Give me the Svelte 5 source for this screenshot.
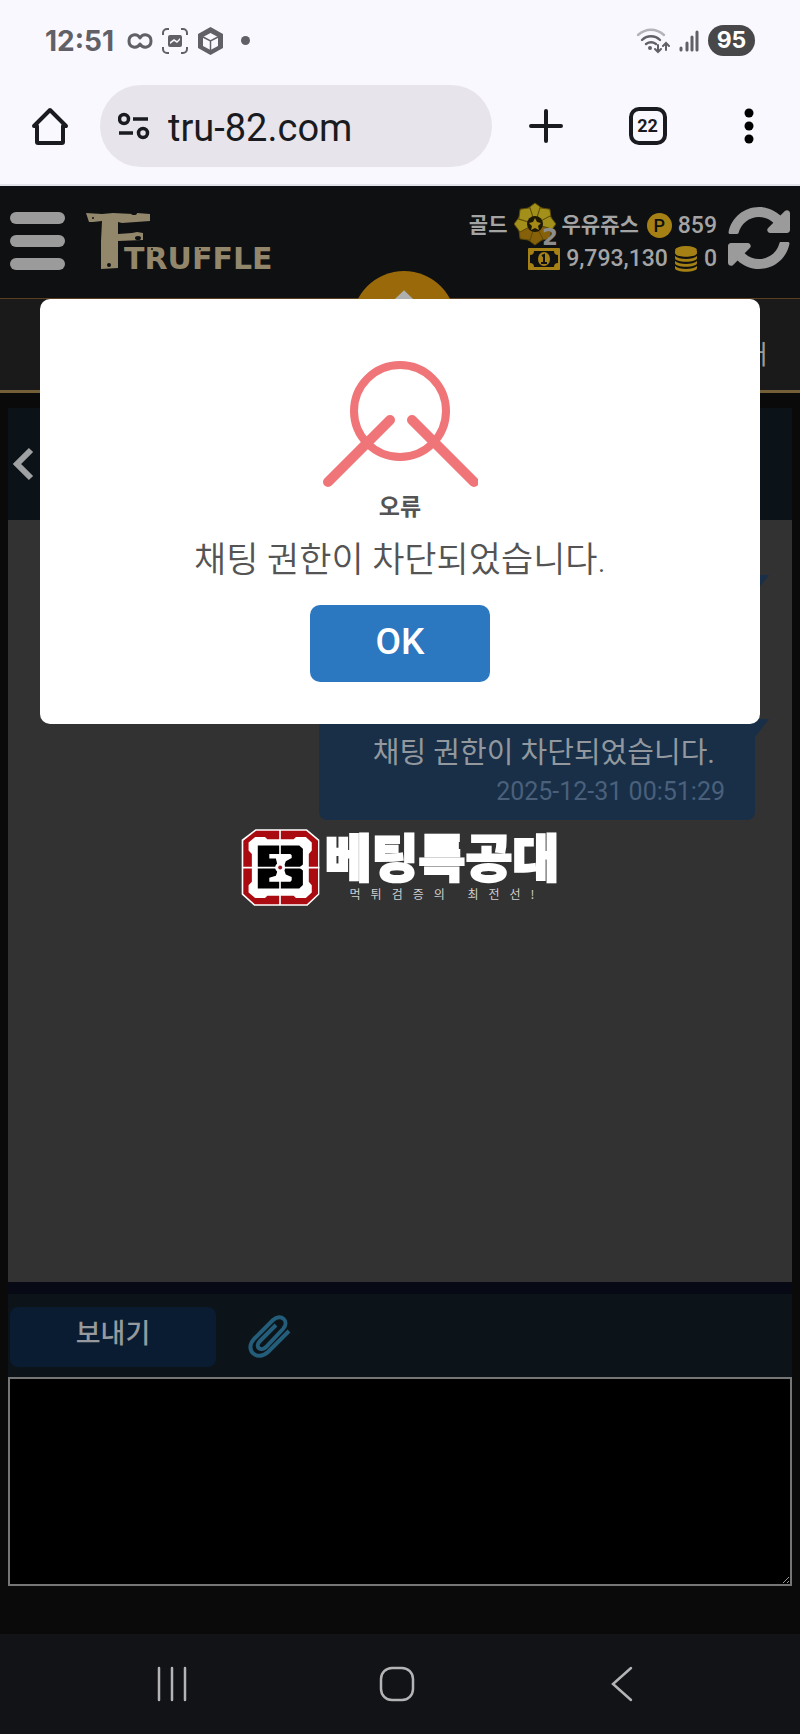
<script lang="ts">
	type Message = { text: string; time: string };

	let messages: Message[] = $state([
		{ text: '채팅 권한이 차단되었습니다.', time: '2025-12-31 00:51:29' },
		{ text: '채팅 권한이 차단되었습니다.', time: '2025-12-31 00:51:29' }
	]);
	let url = $state('tru-82.com');
	let draft = $state('');
	let alertOpen = $state(true);

	const rays = [0, 45, 90, 135, 180, 225, 270, 315];
</script>

<div class="screen">
	<header class="chrome">
		<div class="status">
			<div class="status-side">
				<span class="clock">12:51</span>
				<svg class="infinity" viewBox="0 0 26 16" aria-hidden="true">
					<path
						d="M13 5C10 0 2 1 2 8s8 8 11 3c3 5 11 4 11-3s-8-8-11-3z"
						fill="none"
						stroke="currentColor"
						stroke-width="3"
						stroke-linejoin="round"
					/>
				</svg>
				<svg class="icon26" viewBox="0 0 26 26" aria-hidden="true">
					<path
						d="M1 7V5a4 4 0 0 1 4-4h2M19 1h2a4 4 0 0 1 4 4v2M25 19v2a4 4 0 0 1-4 4h-2M7 25H5a4 4 0 0 1-4-4v-2"
						fill="none"
						stroke="currentColor"
						stroke-width="2"
					/>
					<rect x="6" y="7" width="14" height="12" rx="2" fill="currentColor" />
					<path d="M8 14l4-3 3 2 3-3v2l-3 3-3-2-4 3z" fill="#faf8ff" />
				</svg>
				<svg class="hex" viewBox="0 0 27 28" aria-hidden="true">
					<path d="M13.5 0L26 7v14l-12.500 7L1 21V7z" fill="currentColor" />
					<path d="M13.500 6L21 10v9l-7.500 4L6 19v-9z" fill="#faf8ff" />
					<path d="M6 10l7.500 4L21 10M13.500 14v9" fill="none" stroke="currentColor" stroke-width="1.500" />
				</svg>
				<span class="more-dot"></span>
			</div>
			<div class="status-side right">
				<svg class="wifi" viewBox="0 0 34 26" aria-hidden="true">
					<g fill="none" stroke-width="2.400" stroke-linecap="round">
						<path d="M2 7c8-7 18-7 26 0" stroke="#b4b3b8" />
						<path d="M6 12c5-5 13-5 18 0" stroke="currentColor" />
						<path d="M10 16c3-2 7-2 10 0" stroke="currentColor" />
						<path d="M22 17v7m-3-3l3 3 3-3M30 22v-7m-3 3l3-3 3 3" stroke="currentColor" stroke-width="2" />
					</g>
					<circle cx="14" cy="20" r="2" fill="currentColor" />
				</svg>
				<svg class="signal" viewBox="0 0 20 22" aria-hidden="true">
					<path
						d="M2 18v2M8 13v7M13 7v13M18 2v18"
						stroke="currentColor"
						stroke-width="3"
						stroke-linecap="round"
					/>
				</svg>
				<span class="battery">95</span>
			</div>
		</div>
		<div class="toolbar">
			<button class="plain" aria-label="Home">
				<svg class="icon38" viewBox="0 0 38 38" aria-hidden="true">
					<path
						d="M2 19L18 3l16 16h-3v16a1 1 0 0 1-1 1H6a1 1 0 0 1-1-1V19z"
						fill="none"
						stroke="currentColor"
						stroke-width="4"
						stroke-linejoin="round"
					/>
				</svg>
			</button>
			<label class="omnibox">
				<svg class="tune" viewBox="0 0 32 28" aria-hidden="true">
					<g fill="none" stroke="currentColor" stroke-width="3.500">
						<circle cx="6" cy="7" r="4.500" />
						<circle cx="25" cy="21" r="4.500" />
						<path d="M15 7h15M1 21h14" />
					</g>
				</svg>
				<input type="text" aria-label="Address" bind:value={url} />
			</label>
			<div class="actions">
				<button class="plain" aria-label="New tab">
					<svg class="icon34" viewBox="0 0 34 34" aria-hidden="true">
						<path d="M17 2v30M2 17h30" stroke="currentColor" stroke-width="4" stroke-linecap="round" />
					</svg>
				</button>
				<button class="plain tabs" aria-label="22 tabs">22</button>
				<button class="plain" aria-label="Menu">
					<svg class="dots" viewBox="0 0 10 36" aria-hidden="true">
						<circle cx="5" cy="5" r="4.500" />
						<circle cx="5" cy="18" r="4.500" />
						<circle cx="5" cy="31" r="4.500" />
					</svg>
				</button>
			</div>
		</div>
	</header>

	<main class="page">
		<div class="site-head">
			<button class="plain burger" aria-label="메뉴">
				<span></span>
				<span></span>
				<span></span>
			</button>
			<a class="brand" href="#home">
				<svg viewBox="0 0 200 66" role="img" aria-label="TRUFFLE">
					<g fill="#92866b">
						<path d="M1 1l16 1 11-1 20 1 4-1 13 1v7l-28 2-4-1v12l14-1 5-1 6 1v7l-25 1v27l-17 1V29l1-20-9 1H4z" />
						<text x="39" y="57">TRUFFLE</text>
					</g>
					<g fill="#0e1012">
						<ellipse cx="49" cy="1" rx="3" ry="2" />
						<ellipse cx="53" cy="26" rx="3" ry="2" />
						<circle cx="8" cy="6" r="1" />
						<circle cx="24" cy="53" r="2" />
						<circle cx="67" cy="37" r="1" />
						<circle cx="115" cy="37" r="1" />
						<circle cx="165" cy="37" r="1" />
					</g>
				</svg>
			</a>
			<div class="account">
				<div class="row">
					<span class="ko">골드</span>
					<span class="user">
						<svg class="medal" viewBox="0 0 48 52" aria-hidden="true">
							<circle cx="21" cy="24" r="15" fill="#8f7a12" />
							{#each rays as angle}
								<path
									d="M13 9l8-6 8 6-8 15z"
									fill={angle > 90 && angle < 270 ? '#87600a' : '#a2901a'}
									stroke="#5d4a09"
									transform="rotate({angle} 21 24)"
								/>
							{/each}
							<circle cx="21" cy="24" r="8" fill="#1d1706" />
							<path d="M21 18l2 4 4 1-3 3 1 4-4-2-4 2 1-4-3-3 4-1z" fill="#a58a16" />
							<text x="28" y="45">2</text>
						</svg>
						<span class="ko">우유쥬스</span>
					</span>
					<span class="point">P</span>
					<span>859</span>
				</div>
				<div class="row">
					<svg class="bill" viewBox="0 0 32 22" aria-hidden="true">
						<rect width="32" height="22" rx="1" fill="#a58115" />
						<path d="M6 3h20a4 4 0 0 0 4 4v8a4 4 0 0 0-4 4H6a4 4 0 0 0-4-4V7a4 4 0 0 0 4-4z" fill="#0e1012" />
						<ellipse cx="16" cy="11" rx="6" ry="7" fill="#a58115" />
						<path d="M14 8l2-1v8m-3 0h6" stroke="#0e1012" stroke-width="2" fill="none" />
					</svg>
					<span>9,793,130</span>
					<svg class="coins" viewBox="0 0 24 26" aria-hidden="true">
						<g fill="#a58115">
							<path d="M1 20v2c0 5 22 5 22 0v-2c-4 4-18 4-22 0z" />
							<path d="M1 15v2c0 5 22 5 22 0v-2c-4 4-18 4-22 0z" />
							<path d="M1 10v2c0 5 22 5 22 0v-2c-4 4-18 4-22 0z" />
							<path d="M1 5v2c0 5 22 5 22 0V5z" />
							<ellipse cx="12" cy="4" rx="11" ry="4" />
						</g>
					</svg>
					<span>0</span>
				</div>
			</div>
			<button class="plain" aria-label="새로고침">
				<svg class="refresh" viewBox="0 0 512 512" aria-hidden="true">
					<path
						d="M370.72 133.28C339.458 104.008 298.888 87.962 255.848 88c-77.458.068-144.328 53.178-162.791 126.85-1.344 5.363-6.122 9.15-11.651 9.15H24.103c-7.498 0-13.194-6.807-11.807-14.176C33.933 94.924 134.813 8 256 8c66.448 0 126.791 26.136 171.315 68.685L463.03 40.97C478.149 25.851 504 36.559 504 57.941V192c0 13.255-10.745 24-24 24H345.941c-21.382 0-32.09-25.851-16.971-40.971l41.75-41.749zM32 296h134.059c21.382 0 32.09 25.851 16.971 40.971l-41.75 41.75c31.262 29.273 71.835 45.319 114.876 45.28 77.418-.07 144.315-53.144 162.787-126.849 1.344-5.363 6.122-9.15 11.651-9.15h57.304c7.498 0 13.194 6.807 11.807 14.176C478.067 417.076 377.187 504 256 504c-66.448 0-126.791-26.136-171.315-68.685L48.97 471.03C33.851 486.149 8 475.441 8 454.059V320c0-13.255 10.745-24 24-24z"
					/>
				</svg>
			</button>
		</div>

		<nav class="site-nav">
			<a class="home-circle" href="#home" aria-label="홈">
				<svg viewBox="0 0 60 60" aria-hidden="true"><path d="M30 2L58 29h-8v26H10V29H2z" /></svg>
			</a>
			<a class="nav-link" href="#more">터</a>
		</nav>

		<section class="chat">
			<div class="chat-head">
				<button class="plain" aria-label="뒤로">
					<svg class="back" viewBox="0 0 22 34" aria-hidden="true">
						<path d="M19 3L5 17l14 14" fill="none" stroke="currentColor" stroke-width="6" />
					</svg>
				</button>
			</div>
			<div class="log">
				{#each messages as message}
					<article class="bubble">
						<p>{message.text}</p>
						<time>{message.time}</time>
					</article>
				{/each}
			</div>
			<div class="compose">
				<button class="send">보내기</button>
				<button class="plain clip" aria-label="파일 첨부">
					<svg viewBox="0 0 44 46" aria-hidden="true">
						<path
							d="M41 17L20 38C9 48-4 36 6 25L25 6c8-7 17 1 10 9L18 33c-5 5-12 0-6-6l16-16"
							fill="none"
							stroke="currentColor"
							stroke-width="4"
						/>
					</svg>
				</button>
			</div>
			<textarea aria-label="메시지" bind:value={draft}></textarea>
		</section>

		{#if alertOpen}
			<div class="overlay">
				<div class="modal" role="alertdialog" aria-labelledby="alert-title">
					<svg class="error" viewBox="0 0 156 130" aria-hidden="true">
						<g fill="none" stroke="#ef7578" stroke-linecap="round">
							<circle cx="78" cy="52" r="46" stroke-width="8" />
							<path d="M68 61L6 123M90 61l62 62" stroke-width="10" />
						</g>
					</svg>
					<h2 id="alert-title">오류</h2>
					<p>채팅 권한이 차단되었습니다.</p>
					<button class="ok" onclick={() => (alertOpen = false)}>OK</button>
				</div>
			</div>
		{/if}
	</main>

	<footer class="system-nav">
		<button class="plain" aria-label="Recents">
			<svg viewBox="0 0 36 36" aria-hidden="true"><path d="M5 2v32M18 2v32M31 2v32" /></svg>
		</button>
		<button class="plain" aria-label="Home">
			<svg viewBox="0 0 36 36" aria-hidden="true"><rect x="2" y="2" width="32" height="32" rx="11" /></svg>
		</button>
		<button class="plain" aria-label="Back">
			<svg viewBox="0 0 36 36" aria-hidden="true"><path d="M27 2L9 18l18 16" /></svg>
		</button>
	</footer>

	<div class="watermark">
		<svg viewBox="28 38 240 236" aria-hidden="true">
			<path d="M30 72l42-32h156l38 32v166l-36 34H68l-38-34z" fill="#fff" />
			<path d="M35 75l39-31h152l36 31v161l-34 32H70l-35-32z" fill="#a90b10" />
			<path
				d="M51 80l20-17h30l7 7h80l7-7h30l18 17v24l-9 11v84l9 11v22l-18 17h-30l-7-7h-80l-7 7H71l-20-17v-22l10-11v-84l-10-11z"
				fill="#fff"
			/>
			<path d="M79 89h126l11 10v48l-11 9 11 9v44l-11 11H79z" />
			<path
				d="M114 115h64l4 4v8l-18 10-4 12v16l4 12 18 8v10l-4 4h-64v-12l20-6 4-12-6-12 6-12-4-16h-20z"
				fill="#fff"
			/>
			<path d="M144 42h5v228h-5zM32 154h234v5H32z" fill="#fff" />
			<circle cx="147" cy="156" r="15" fill="#fff" />
			<circle cx="147" cy="156" r="6" fill="#a31625" />
		</svg>
		<div class="watermark-text">
			<strong>베팅특공대</strong>
			<span>먹튀검증의 최전선!</span>
		</div>
	</div>
</div>

<style>
	:global(body) {
		margin: 0;
		background: #0a0a0b;
	}
	.screen {
		position: relative;
		display: flex;
		flex-direction: column;
		min-height: 100vh;
		font-family: Roboto, 'Noto Sans CJK KR', sans-serif;
	}
	.screen * {
		box-sizing: border-box;
	}
	svg {
		display: block;
	}
	p,
	h2 {
		margin: 0;
	}
	.plain {
		padding: 0;
		border: 0;
		background: none;
		color: inherit;
		font: inherit;
		cursor: pointer;
	}

	/* browser chrome */
	.chrome {
		background: #faf8ff;
		border-bottom: 2px solid #e2e3ea;
		color: #1a1b20;
	}
	.status {
		display: flex;
		align-items: center;
		justify-content: space-between;
		height: 81px;
		padding: 0 45px;
		color: #606066;
	}
	.status-side {
		display: flex;
		align-items: center;
		gap: 9px;
	}
	.clock {
		margin-right: 4px;
		font: 700 28px/32px Inter, sans-serif;
	}
	.infinity {
		width: 26px;
		height: 16px;
	}
	.icon26 {
		width: 26px;
		height: 26px;
	}
	.hex {
		width: 27px;
		height: 28px;
	}
	.more-dot {
		width: 9px;
		height: 9px;
		margin-left: 8px;
		border-radius: 50%;
		background: currentColor;
	}
	.wifi {
		width: 34px;
		height: 26px;
	}
	.signal {
		width: 20px;
		height: 22px;
	}
	.battery {
		width: 47px;
		border-radius: 16px;
		background: #48484a;
		color: #fff;
		font: 700 23px/31px Inter, sans-serif;
		text-align: center;
	}
	.toolbar {
		display: flex;
		align-items: center;
		padding: 4px 46px 17px 32px;
	}
	.icon38 {
		width: 38px;
		height: 38px;
	}
	.icon34 {
		width: 34px;
		height: 34px;
	}
	.omnibox {
		display: flex;
		flex: 1;
		align-items: center;
		gap: 18px;
		min-width: 0;
		height: 82px;
		margin: 0 37px 0 30px;
		padding: 0 18px;
		border-radius: 41px;
		background: #e7e5eb;
	}
	.tune {
		flex: none;
		width: 32px;
		height: 28px;
	}
	.omnibox input {
		flex: 1;
		min-width: 0;
		padding: 4px 0 0;
		border: 0;
		outline: 0;
		background: none;
		color: inherit;
		font: 400 38px/46px Roboto, sans-serif;
	}
	.actions {
		display: grid;
		grid-template-columns: 34px 1fr 10px;
		align-items: center;
		justify-items: center;
		width: 225px;
	}
	.tabs {
		width: 38px;
		height: 38px;
		margin-right: 12px;
		border: 4px solid currentColor;
		border-radius: 10px;
		font: 700 18px/30px Roboto, sans-serif;
	}
	.dots {
		width: 10px;
		height: 36px;
	}

	/* site header */
	.page {
		position: relative;
		display: flex;
		flex: 1;
		flex-direction: column;
		background: #0a0a0b;
	}
	.site-head {
		display: flex;
		align-items: flex-start;
		height: 113px;
		padding: 20px 9px 0 10px;
		border-bottom: 1px solid #5a4020;
		background: #0e1012;
		color: #a4a4a5;
	}
	.burger {
		display: flex;
		flex-direction: column;
		gap: 11px;
		width: 55px;
		padding-top: 6px;
	}
	.burger span {
		height: 12px;
		border-radius: 6px;
		background: #9b9b9c;
	}
	.brand {
		margin-left: 20px;
		padding-top: 6px;
	}
	.brand svg {
		width: 200px;
		height: 66px;
	}
	.brand text {
		font: 700 30px 'DejaVu Sans', sans-serif;
	}
	.account {
		margin: 3px 10px 0 auto;
		font: 500 23px/33px Roboto, 'Noto Sans CJK KR', sans-serif;
	}
	.row {
		display: flex;
		align-items: center;
		justify-content: flex-end;
		gap: 6px;
		height: 33px;
	}
	.ko {
		font-size: 21px;
		font-weight: 700;
	}
	.user {
		display: flex;
		align-items: center;
		margin-right: 2px;
	}
	.medal {
		width: 48px;
		height: 52px;
	}
	.medal text {
		fill: #8d8d8d;
		font: 700 23px 'DejaVu Sans', sans-serif;
	}
	.point {
		width: 25px;
		height: 25px;
		border-radius: 50%;
		background: #a58115;
		color: #0e1012;
		font-size: 18px;
		line-height: 26px;
		text-align: center;
	}
	.bill {
		width: 32px;
		height: 22px;
	}
	.coins {
		width: 24px;
		height: 26px;
	}
	.refresh {
		width: 64px;
		height: 64px;
		fill: #9b9b9c;
	}
	.site-nav {
		position: relative;
		display: flex;
		align-items: center;
		justify-content: flex-end;
		height: 94px;
		padding-right: 32px;
		border-bottom: 3px solid #755f38;
		background: #1a1a1a;
	}
	.home-circle {
		position: absolute;
		top: -28px;
		left: calc(50% - 48px);
		display: grid;
		place-items: center;
		width: 104px;
		height: 104px;
		border-radius: 50%;
		background: #99690a;
	}
	.home-circle svg {
		width: 70px;
		height: 70px;
		fill: #aeb0b0;
	}
	.nav-link {
		padding-top: 20px;
		color: #9b9b9c;
		font-size: 26px;
		line-height: 36px;
		text-decoration: none;
	}

	/* chat */
	.chat {
		display: flex;
		flex: 1;
		flex-direction: column;
		padding: 15px 8px 48px;
	}
	.chat-head {
		display: flex;
		align-items: center;
		height: 112px;
		padding: 0 4px;
		background: #0b1319;
		color: #a0a1a2;
	}
	.back {
		width: 22px;
		height: 34px;
	}
	.log {
		display: flex;
		flex: 1;
		flex-direction: column;
		align-items: flex-end;
		gap: 41px;
		padding: 53px 37px 53px 8px;
		background: #323232;
	}
	.bubble {
		position: relative;
		padding: 14px 30px 11px 54px;
		border-radius: 8px;
		background: #182f47;
		text-align: right;
	}
	.bubble::after {
		content: '';
		position: absolute;
		top: 2px;
		left: calc(100% - 8px);
		width: 22px;
		height: 18px;
		background: #182f47;
		clip-path: polygon(0 0, 100% 0, 8px 100%, 0 100%);
	}
	.bubble p {
		margin-right: 10px;
		color: #92989e;
		font-size: 29px;
		line-height: 44px;
	}
	.bubble time {
		display: block;
		color: #4a607b;
		font-size: 25px;
		line-height: 34px;
	}
	.compose {
		display: flex;
		align-items: center;
		gap: 32px;
		padding: 13px 2px 10px;
		border-top: 12px solid #070a14;
		background: #0c1319;
	}
	.send {
		width: 206px;
		height: 60px;
		padding: 0 0 10px;
		border: 0;
		border-radius: 8px;
		background: #0a1c31;
		color: #96999e;
		font: 500 27px/40px 'Noto Sans CJK KR', sans-serif;
	}
	.clip {
		color: #235d79;
	}
	.clip svg {
		width: 44px;
		height: 46px;
	}
	textarea {
		display: block;
		width: 100%;
		height: 209px;
		margin: 0;
		padding: 8px;
		border: 2px solid #767676;
		border-radius: 0;
		outline: 0;
		background: #000;
		color: #999;
		font: 27px/36px Roboto, 'Noto Sans CJK KR', sans-serif;
	}

	/* alert */
	.overlay {
		position: absolute;
		inset: 0;
		padding: 113px 40px 0;
	}
	.modal {
		display: flex;
		flex-direction: column;
		align-items: center;
		padding: 60px 20px 42px;
		border-radius: 10px;
		background: #fff;
		color: #545454;
		text-align: center;
	}
	.error {
		width: 156px;
		height: 130px;
	}
	.modal h2 {
		padding-top: 2px;
		font-size: 23px;
		font-weight: 700;
		line-height: 34px;
	}
	.modal p {
		font-size: 35px;
		font-weight: 350;
		line-height: 72px;
	}
	.ok {
		width: 180px;
		height: 77px;
		margin-top: 8px;
		padding: 0 0 4px;
		border: 0;
		border-radius: 10px;
		background: #2b77c0;
		color: #fff;
		font: 500 37px/44px Roboto, sans-serif;
		cursor: pointer;
	}

	/* system bar */
	.system-nav {
		display: grid;
		grid-template-columns: repeat(3, 1fr);
		align-items: center;
		justify-items: center;
		height: 100px;
		padding: 0 66px 0 60px;
		background: #121316;
	}
	.system-nav svg {
		width: 36px;
		height: 36px;
		fill: none;
		stroke: #b4b4b6;
		stroke-width: 2.5px;
		stroke-linecap: round;
	}

	/* centred site mark laid over the page */
	.watermark {
		position: absolute;
		inset: 0;
		display: flex;
		align-items: center;
		justify-content: center;
		gap: 5px;
		color: #fff;
		font-family: 'Noto Sans CJK KR', sans-serif;
		pointer-events: none;
	}
	.watermark svg {
		width: 79px;
		height: 79px;
	}
	.watermark-text {
		display: flex;
		flex-direction: column;
		align-items: center;
	}
	.watermark strong {
		font-size: 51px;
		font-weight: 900;
		line-height: 50px;
		-webkit-text-stroke: 2px #fff;
	}
	.watermark span {
		padding: 4px 0 0 10px;
		color: #d0d0d0;
		font-size: 12px;
		letter-spacing: 10px;
		line-height: 20px;
	}
</style>
